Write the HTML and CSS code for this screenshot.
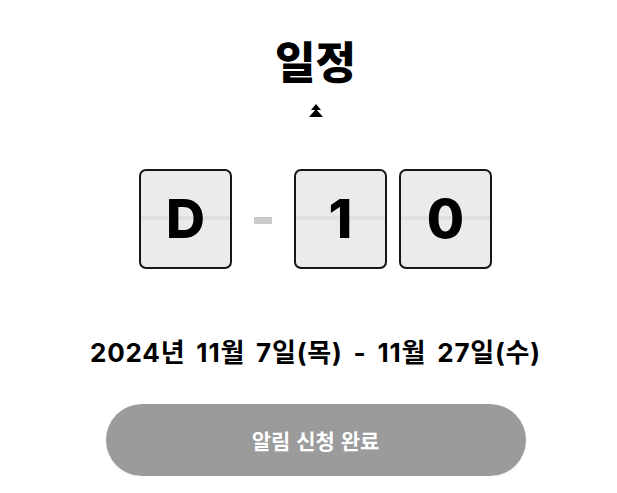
FILE: index.html
```html
<!DOCTYPE html>
<html lang="ko">
<head>
<meta charset="utf-8">
<link rel="stylesheet" href="styles.css">
</head>
<body>
<main class="page">
  <h1 class="title">일정</h1>
  <svg class="up-icon" width="16" height="14" viewBox="0 0 16 14">
    <polygon points="8,0 13,6 3,6" fill="#000"/>
    <polygon points="8,5 15,13 1,13" fill="#000"/>
  </svg>
  <div class="counter">
    <div class="card">D</div>
    <div class="dash"></div>
    <div class="digits">
      <div class="card">1</div>
      <div class="card">0</div>
    </div>
  </div>
  <p class="period">2024년 11월 7일(목) - 11월 27일(수)</p>
  <button class="done-btn">알림 신청 완료</button>
</main>
</body>
</html>
```
FILE: styles.css
```css
html, body {
  margin: 0;
  padding: 0;
  background: #fff;
}
.page {
  box-sizing: border-box;
  width: 617px;
  padding-left: 14px;
  display: flex;
  flex-direction: column;
  align-items: center;
  font-family: Inter, "Noto Sans CJK KR", "Noto Sans", sans-serif;
  color: #000;
}
.title {
  margin: 31px 0 0;
  font-family: "Noto Sans CJK KR", sans-serif;
  font-size: 44px;
  line-height: 58px;
  font-weight: 900;
  letter-spacing: 0;
}
.up-icon {
  display: block;
  margin-top: 15px;
}
.counter {
  margin-top: 51px;
  display: flex;
  align-items: center;
}
.digits {
  display: flex;
  gap: 12px;
}
.card {
  box-sizing: border-box;
  width: 93px;
  height: 100px;
  border: 2px solid #161616;
  border-radius: 7px;
  background: linear-gradient(to bottom, #ebebeb 0, #ebebeb 47%, #e0e0e0 47%, #e0e0e0 51%, #ebebeb 51%, #ebebeb 100%);
  display: flex;
  align-items: center;
  justify-content: center;
  font-family: Inter, Roboto, sans-serif;
  font-weight: 800;
  font-size: 54px;
  line-height: 1;
}
.dash {
  width: 18px;
  height: 7px;
  background: #c9c9c9;
  margin: 2px 22px 0 22px;
}
.period {
  margin: 66px 0 0;
  font-family: Inter, "Noto Sans CJK KR", sans-serif;
  font-size: 26px;
  line-height: 36px;
  font-weight: 700;
  letter-spacing: 0.8px;
  word-spacing: 4px;
}
.done-btn {
  margin-top: 33px;
  width: 420px;
  height: 72px;
  border: none;
  border-radius: 36px;
  background: #9b9b9b;
  color: #fff;
  font-family: "Noto Sans CJK KR", "Noto Sans", sans-serif;
  font-size: 21px;
  font-weight: 700;
  box-shadow: 0 1px 2px rgba(0,0,0,0.08);
  padding: 0;
}
```
